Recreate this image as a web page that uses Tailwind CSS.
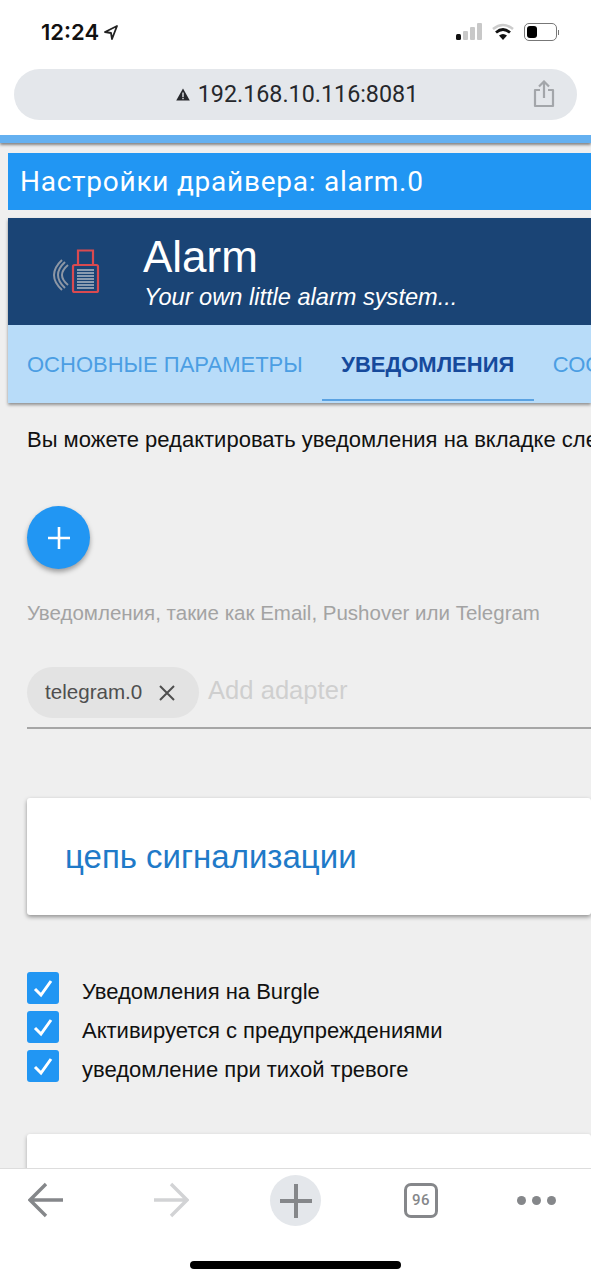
<!DOCTYPE html>
<html lang="ru">
<head>
<meta charset="utf-8">
<script src="https://cdn.jsdelivr.net/npm/@tailwindcss/browser@4"></script>
</head>
<body class="w-[591px] h-[1280px] overflow-hidden bg-white font-['Liberation_Sans',sans-serif] relative">
<div class="h-[135px] bg-white flex flex-col">
  <div class="h-[69px] flex justify-between pl-[41px] pr-[32px] pt-[19px]">
    <div class="flex items-start gap-[5px]">
      <span class="font-['Inter',sans-serif] font-semibold text-[22px] leading-[27px] text-[#111]">12:24</span>
      <svg class="mt-[6px]" width="14" height="15" viewBox="0 0 14 15"><path d="M13 1 L1 7 L7 8 L8 14 Z" fill="none" stroke="#222" stroke-width="1.8" stroke-linejoin="round"/></svg>
    </div>
    <div class="flex items-start gap-[10px] pt-[4px]">
      <svg width="26" height="18" viewBox="0 0 26 18"><rect x="0" y="11" width="5" height="6" rx="1.5" fill="#111"/><rect x="7" y="8" width="5" height="9" rx="1" fill="#c8c8c8"/><rect x="14" y="4" width="5" height="13" rx="1" fill="#c8c8c8"/><rect x="21" y="0" width="5" height="17" rx="1" fill="#c8c8c8"/></svg>
      <svg width="22" height="18" viewBox="0 0 22 18"><path d="M1 6 Q11 -2 21 6" fill="none" stroke="#ccc" stroke-width="2.6"/><path d="M4 9.5 Q11 3.5 18 9.5" fill="none" stroke="#111" stroke-width="2.8"/><path d="M7 12.5 Q11 9.5 15 12.5 L11 17 Z" fill="#111"/></svg>
      <div class="flex items-center gap-[1px]">
        <div class="w-[33px] h-[18px] rounded-[5px] border border-[#777] p-[2px] bg-white"><div class="w-[10px] h-full rounded-[3px] bg-black"></div></div>
        <div class="w-[1px] h-[5px] bg-[#777]"></div>
      </div>
    </div>
  </div>
  <div class="mx-[14px] w-[563px] h-[51px] rounded-full bg-[#e4e7eb] flex items-center relative justify-center">
    <div class="flex items-center gap-[8px] text-[23.3px] text-[#26282c] font-['Roboto',sans-serif] ml-[3px]">
      <svg width="14" height="13" viewBox="0 0 14 13"><path d="M7 0.5 L13.8 12.5 L0.2 12.5 Z" fill="#26282c"/><rect x="6.3" y="4.5" width="1.4" height="4.5" fill="#e4e7eb"/><rect x="6.3" y="9.8" width="1.4" height="1.4" fill="#e4e7eb"/></svg>
      <span>192.168.10.116:8081</span>
    </div>
    <svg class="absolute right-[22px] top-[11px]" width="22" height="28" viewBox="0 0 22 28"><path d="M7 10 H2 V26 H20 V10 H15" fill="none" stroke="#a3a6aa" stroke-width="2.2" stroke-linejoin="round"/><path d="M11 18 V2 M6 6.5 L11 1.5 L16 6.5" fill="none" stroke="#a3a6aa" stroke-width="2.2"/></svg>
  </div>
</div>
<div class="h-[1033px] bg-[#efefef] overflow-hidden">
  <div class="h-[8px] bg-[#64b0f0] shadow-[0_2px_3px_rgba(0,0,0,0.45)]"></div>
  <div class="ml-[8px] mt-[10px] h-[57px] bg-[#2196f3] flex items-center pl-[12px] text-white text-[28px] font-['Roboto',sans-serif] tracking-[0.75px]">Настройки драйвера: alarm.0</div>
  <div class="ml-[8px] mt-[8px] shadow-[0_2px_3px_rgba(0,0,0,0.4)]">
    <div class="h-[107px] bg-[#1a4475] flex text-white">
      <div class="w-[136px] flex items-start pl-[45px] pt-[31px]">
        <svg class="overflow-visible" width="46" height="46" viewBox="0 0 46 46"><g fill="none" stroke="#8d97a5" stroke-width="2"><path d="M9 11 Q-7 26 9 41"/><path d="M12 13 Q-2 26 12 39"/><path d="M15 16 Q3 26 15 36"/></g><g fill="none" stroke="#d94a50" stroke-width="2.2"><rect x="20" y="16" width="25" height="27" rx="1.5"/><path d="M25 16 V1.5 H40 V16"/></g><g stroke="#b0b8c4" stroke-width="1.7"><path d="M24 21 H41 M24 24 H41 M24 27 H41 M24 30 H41 M24 33 H41 M24 36 H41 M24 39 H41"/></g></svg>
      </div>
      <div class="flex flex-col">
        <div class="text-[44px] leading-[50px] mt-[14px] ml-[-1px]">Alarm</div>
        <div class="text-[23.6px] leading-[28px] italic mt-[1px]">Your own little alarm system...</div>
      </div>
    </div>
    <div class="h-[78px] bg-[#b8dcf9] flex whitespace-nowrap overflow-hidden text-[22px]">
      <div class="pl-[19px] pr-[19px] flex items-center text-[#4b9ee3]">ОСНОВНЫЕ ПАРАМЕТРЫ</div>
      <div class="w-[212px] ml-[0px] flex items-center justify-center font-bold text-[#164a9c] relative shrink-0">УВЕДОМЛЕНИЯ<div class="absolute left-0 right-0 bottom-[2px] h-[2px] bg-[#5aa2e2]"></div></div>
      <div class="pl-[19px] flex items-center text-[#4b9ee3]">СОСТОЯНИЯ</div>
    </div>
  </div>
  <div class="pl-[27px] mt-[24px] text-[22px] leading-[26px] text-[#111] whitespace-nowrap">Вы можете редактировать уведомления на вкладке слева</div>
  <div class="ml-[27px] mt-[54px] w-[63px] h-[63px] rounded-full bg-[#2196f3] shadow-[0_3px_5px_rgba(0,0,0,0.35)] flex items-center justify-center -translate-y-px">
    <svg width="24" height="24" viewBox="0 0 24 24"><path d="M12 1 V23 M1 12 H23" stroke="#fff" stroke-width="2.6"/></svg>
  </div>
  <div class="pl-[27px] mt-[30px] text-[20.5px] leading-[26px] text-[#a3a3a3] whitespace-nowrap">Уведомления, такие как Email, Pushover или Telegram</div>
  <div class="ml-[27px] mt-[41px] h-[62px] border-b-2 border-[#a6a6a6] flex items-start">
    <div class="w-[172px] h-[51px] rounded-full bg-[#e3e3e3] flex items-center pl-[18px] gap-[17px]">
      <span class="text-[20.6px] text-[#4f4f4f]">telegram.0</span>
      <svg width="16" height="16" viewBox="0 0 16 16"><path d="M1 1 L15 15 M15 1 L1 15" stroke="#4f4f4f" stroke-width="2"/></svg>
    </div>
    <span class="ml-[9px] text-[25.6px] leading-[46px] text-[#cfcfcf]">Add adapter</span>
  </div>
  <div class="ml-[27px] mt-[69px] h-[117px] bg-white rounded-[3px] shadow-[0_2px_4px_rgba(0,0,0,0.4)] flex items-center pl-[38px] text-[33px] text-[#1f7ac8]">цепь сигнализации</div>
  <div class="ml-[27px] mt-[57px] flex flex-col gap-[7px]">
    <div class="flex items-center h-[32px]">
      <div class="w-[32px] h-[32px] rounded-[3px] bg-[#2196f3] flex items-center justify-center"><svg width="24" height="24" viewBox="0 0 24 24"><path d="M4 13 L10 19 L20 5" fill="none" stroke="#fff" stroke-width="3"/></svg></div>
      <span class="ml-[23px] mt-[7px] text-[22px] text-[#111]">Уведомления на Burgle</span>
    </div>
    <div class="flex items-center h-[32px]">
      <div class="w-[32px] h-[32px] rounded-[3px] bg-[#2196f3] flex items-center justify-center"><svg width="24" height="24" viewBox="0 0 24 24"><path d="M4 13 L10 19 L20 5" fill="none" stroke="#fff" stroke-width="3"/></svg></div>
      <span class="ml-[23px] mt-[7px] text-[22px] text-[#111]">Активируется с предупреждениями</span>
    </div>
    <div class="flex items-center h-[32px]">
      <div class="w-[32px] h-[32px] rounded-[3px] bg-[#2196f3] flex items-center justify-center"><svg width="24" height="24" viewBox="0 0 24 24"><path d="M4 13 L10 19 L20 5" fill="none" stroke="#fff" stroke-width="3"/></svg></div>
      <span class="ml-[23px] mt-[7px] text-[22px] text-[#111]">уведомление при тихой тревоге</span>
    </div>
  </div>
  <div class="ml-[27px] mt-[52px] h-[60px] bg-white rounded-[3px] shadow-[0_2px_4px_rgba(0,0,0,0.3)]"></div>
</div>
<div class="absolute left-0 right-0 bottom-0 h-[112px] bg-white border-t border-[#ddd]">
  <div class="h-[64px] flex items-center relative">
    <svg class="absolute left-[28px] top-[13px]" width="36" height="36" viewBox="0 0 36 36"><path d="M35 18 H3 M18 2 L2 18 L18 34" fill="none" stroke="#85878a" stroke-width="3.4"/></svg>
    <svg class="absolute left-[153px] top-[13px]" width="36" height="36" viewBox="0 0 36 36"><path d="M1 18 H33 M18 2 L34 18 L18 34" fill="none" stroke="#d2d3d5" stroke-width="3.4"/></svg>
    <div class="absolute left-[270px] top-[6px] w-[51px] h-[51px] rounded-full bg-[#e4e7eb] flex items-center justify-center">
      <svg width="34" height="36" viewBox="0 0 34 36"><path d="M17 1 V35 M1 18 H33" stroke="#85878a" stroke-width="4"/></svg>
    </div>
    <div class="absolute left-[404px] top-[14px] w-[34px] h-[35px] rounded-[7px] border-[3px] border-[#85878a] flex items-center justify-center text-[15px] font-['Roboto',sans-serif] font-medium tracking-[0.5px] text-[#85878a]">96</div>
    <div class="absolute left-[517px] top-[27px] flex gap-[6px]">
      <div class="w-[9px] h-[9px] rounded-full bg-[#85878a]"></div><div class="w-[9px] h-[9px] rounded-full bg-[#85878a]"></div><div class="w-[9px] h-[9px] rounded-full bg-[#85878a]"></div>
    </div>
  </div>
  <div class="absolute left-[190px] top-[92px] w-[211px] h-[8px] rounded-full bg-black"></div>
</div>
</body>
</html>
